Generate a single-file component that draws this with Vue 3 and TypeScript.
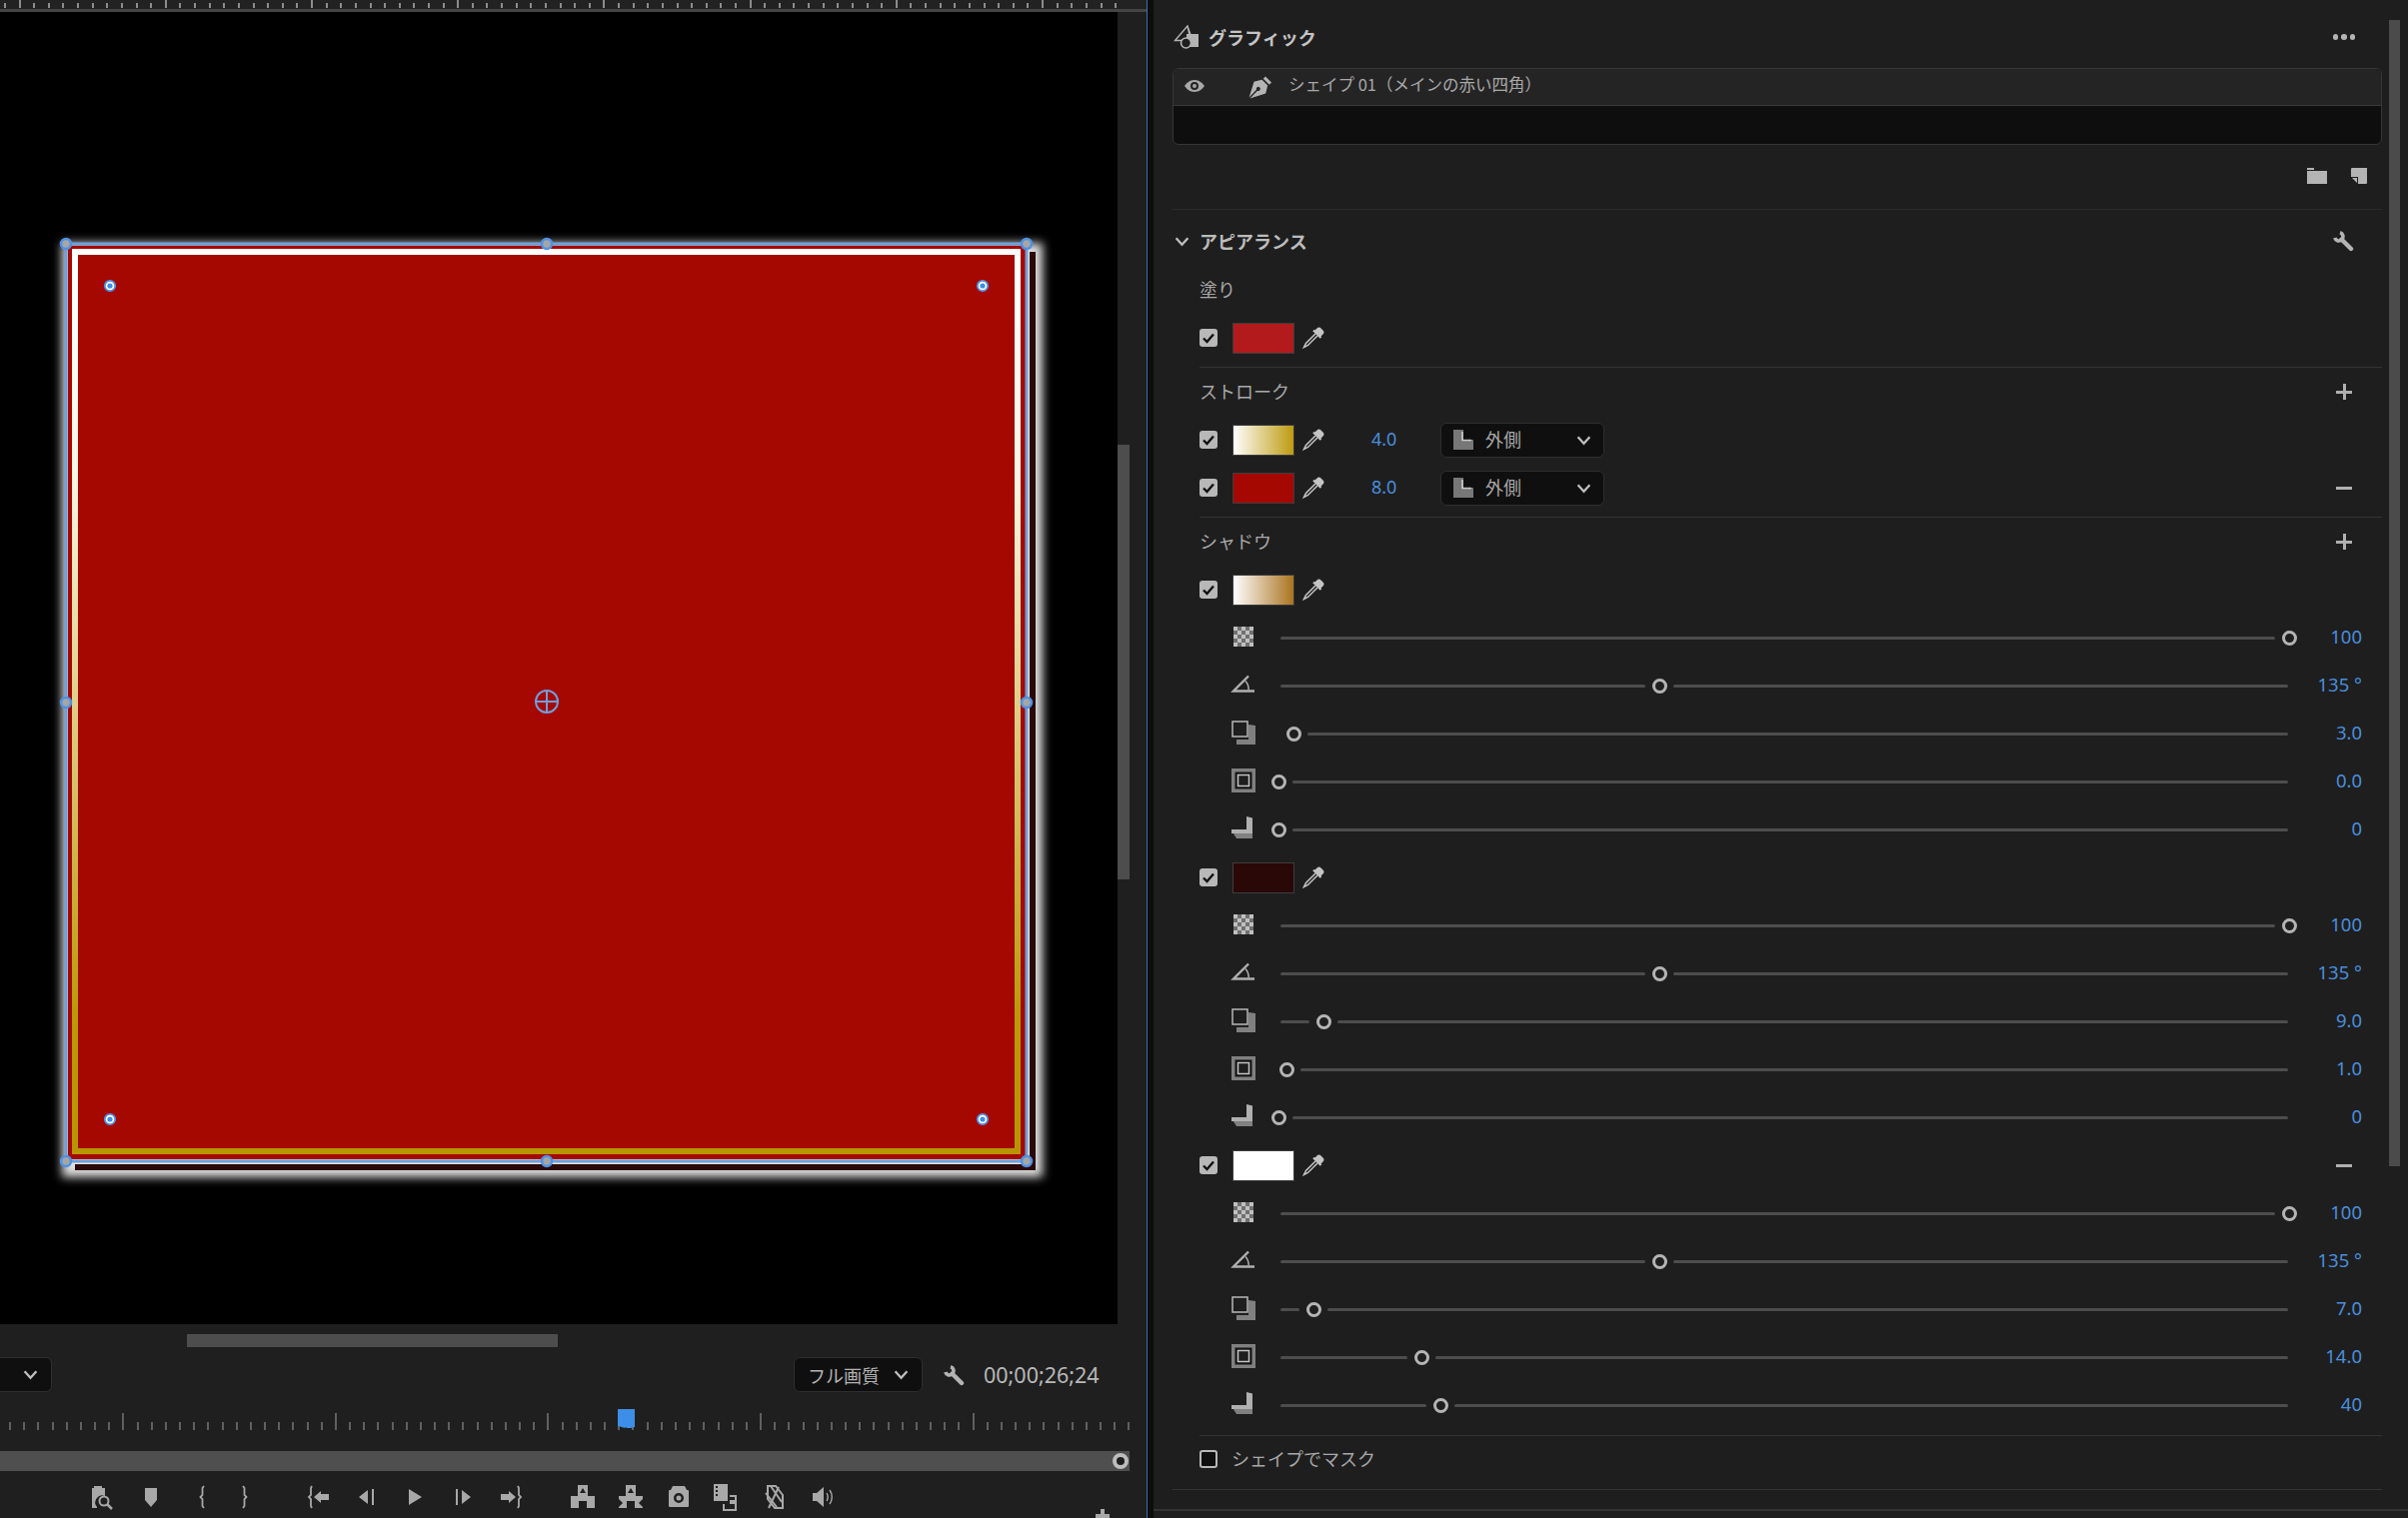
<template>
  <div class="app">
    <svg class="sprites" width="0" height="0">
      <symbol id="i-eye" viewBox="0 0 20 12"><path fill="#a8a8a8" fill-rule="evenodd" d="M10 0c4.5 0 8 3 10 6-2 3-5.500 6-10 6S2 9 0 6c2-3 5.500-6 10-6zm0 2a4 4 0 1 0 0 8 4 4 0 0 0 0-8zm0 2a2 2 0 1 1 0 4 2 2 0 0 1 0-4z"/></symbol>
      <symbol id="i-pen" viewBox="0 0 24 24"><path fill="#b4b4b4" d="M17 1.500l6 6-2.200 2.200-6-6zM13.500 4.800l5.700 5.700-2 8L1.500 23.500l7.500-7.800a2 2 0 1 0-1-1L.6 22.500 5.500 6.800z"/></symbol>
      <symbol id="i-graphic" viewBox="0 0 26 24"><path fill="none" stroke="#b4b4b4" stroke-width="1.400" d="M14 1 1.500 15.500H19zM14 1l2 9"/><path fill="#b4b4b4" d="M13 9h12v13H13z"/><circle cx="12.500" cy="18" r="5" fill="#1e1e1e" stroke="#b4b4b4" stroke-width="1.600"/></symbol>
      <symbol id="i-folder" viewBox="0 0 20 16"><path fill="#b4b4b4" d="M0 3h20v13H0zM0 0h7v2H0z"/></symbol>
      <symbol id="i-item" viewBox="0 0 16 16"><path fill="#b4b4b4" fill-rule="evenodd" d="M1 0h15v15a1 1 0 0 1-1 1H7v-7H0V1a1 1 0 0 1 1-1zM1 10h5v5z"/></symbol>
      <symbol id="i-wrench" viewBox="0 0 22 22"><path fill="none" stroke="#b4b4b4" stroke-width="3.600" d="M8 2.800A4.200 4.200 0 1 1 2.800 8"/><path stroke="#b4b4b4" stroke-width="4.400" stroke-linecap="round" d="M9.500 9.500 19 19"/></symbol>
      <symbol id="i-dropper" viewBox="0 0 22 22"><path fill="#c4c4c4" d="M14.500 1.500a2.800 2.800 0 0 1 4 0l2 2a2.800 2.800 0 0 1 0 4L18 10l-6-6z"/><path stroke="#c4c4c4" stroke-width="2.200" d="M11 3.500l7.500 7.500"/><path fill="none" stroke="#c4c4c4" stroke-width="1.500" d="M13 7 3.500 16.500 1.500 20.500l4-2L15 9"/></symbol>
      <symbol id="i-corner" viewBox="0 0 20 20"><path fill="#777" d="M0 0h10v10h10v10H0z"/><path fill="none" stroke="#ccc" stroke-width="1.600" d="M9 2v8.500h9"/></symbol>

      <symbol id="s-opacity" viewBox="0 0 26 26"><path fill="#707070" d="M3 3h20v20H3z"/><path fill="#c0c0c0" d="M3 3h4v4H3zM11 3h4v4h-4zM19 3h4v4h-4zM7 7h4v4H7zM15 7h4v4h-4zM3 11h4v4H3zM11 11h4v4h-4zM19 11h4v4h-4zM7 15h4v4H7zM15 15h4v4h-4zM3 19h4v4H3zM11 19h4v4h-4zM19 19h4v4h-4z"/></symbol>
      <symbol id="s-angle" viewBox="0 0 26 26"><path fill="none" stroke="#b0b0b0" stroke-width="2.400" d="M18 4.500 3 19.500h21"/><path fill="none" stroke="#b0b0b0" stroke-width="1.500" d="M15 9.500c2 2 3.200 5 3.200 9"/></symbol>
      <symbol id="s-offset" viewBox="0 0 26 26"><path fill="#808080" d="M18 5l7 1v19H6v-5h12z"/><rect x="2" y="2" width="15" height="15" fill="#1e1e1e" stroke="#b8b8b8" stroke-width="1.500"/></symbol>
      <symbol id="s-size" viewBox="0 0 26 26"><path fill="#808080" d="M1 1h24v24H1z"/><rect x="5" y="5" width="16" height="16" fill="#151515" stroke="#151515"/><rect x="7.500" y="7.500" width="11" height="11" fill="#1e1e1e" stroke="#c4c4c4" stroke-width="1.500"/></symbol>
      <symbol id="s-blur" viewBox="0 0 26 26"><path fill="#808080" d="M1 15h16l5-2v10H6z"/><path fill="#b0b0b0" d="M16 1l6 1.500V18H1v-4h15z"/></symbol>

      <symbol id="t-export" viewBox="0 0 28 28"><path fill="#a8a8a8" d="M5 5V3h8v2h3v8a7 7 0 0 0-8 11v1H3V5z"/><circle cx="15" cy="18" r="4.500" fill="none" stroke="#a8a8a8" stroke-width="2"/><path stroke="#a8a8a8" stroke-width="2.500" d="M18 21l5 5"/></symbol>
      <symbol id="t-marker" viewBox="0 0 28 28"><path fill="#a8a8a8" d="M8 5h12v12l-6 7-6-7z"/></symbol>
      <symbol id="t-in" viewBox="0 0 28 28"><path fill="none" stroke="#a8a8a8" stroke-width="1.800" d="M19 3l-1.500 2v7l-2 2 2 2v7l1.500 2"/></symbol>
      <symbol id="t-out" viewBox="0 0 28 28"><path fill="none" stroke="#a8a8a8" stroke-width="1.800" d="M10 3l1.500 2v7l2 2-2 2v7L10 25"/></symbol>
      <symbol id="t-goin" viewBox="0 0 28 28"><path fill="none" stroke="#a8a8a8" stroke-width="1.800" d="M7 3l-1 2v7l-2 2 2 2v7l1 2"/><path fill="#a8a8a8" d="M9 14l7-6v3h8v6h-8v3z"/></symbol>
      <symbol id="t-stepb" viewBox="0 0 28 28"><path fill="#a8a8a8" d="M15 7v14L6 14z"/><path stroke="#a8a8a8" stroke-width="2" d="M20 6v16"/></symbol>
      <symbol id="t-play" viewBox="0 0 28 28"><path fill="#a8a8a8" d="M8 6l13 8-13 8z"/></symbol>
      <symbol id="t-stepf" viewBox="0 0 28 28"><path fill="#a8a8a8" d="M13 7v14l9-7z"/><path stroke="#a8a8a8" stroke-width="2" d="M8 6v16"/></symbol>
      <symbol id="t-goout" viewBox="0 0 28 28"><path fill="none" stroke="#a8a8a8" stroke-width="1.800" d="M21 3l1 2v7l2 2-2 2v7l-1 2"/><path fill="#a8a8a8" d="M19 14l-7-6v3H4v6h8v3z"/></symbol>
      <symbol id="t-lift" viewBox="0 0 28 28"><path fill="#a8a8a8" fill-rule="evenodd" d="M9 2h10v11h7v12h-8v-7h-8v7H2V13h7zm5 3-3 5h6z"/></symbol>
      <symbol id="t-extract" viewBox="0 0 28 28"><path fill="#a8a8a8" fill-rule="evenodd" d="M9 2h10v11h7v3l-4 4 4 4v1h-8v-7h-8v7H2v-1l4-4-4-4v-3h7zm5 3-3 5h6z"/></symbol>
      <symbol id="t-camera" viewBox="0 0 28 28"><path fill="#a8a8a8" fill-rule="evenodd" d="M8 3h12l2 4h1a1 1 0 0 1 1 1v15a1 1 0 0 1-1 1H5a1 1 0 0 1-1-1V8a1 1 0 0 1 1-1h1zm6 7a5 5 0 1 0 0 10 5 5 0 0 0 0-10zm0 2.500a2.500 2.500 0 1 1 0 5 2.500 2.500 0 0 1 0-5z"/></symbol>
      <symbol id="t-compare" viewBox="0 0 28 28"><path fill="#a8a8a8" d="M1 1h14v17H1z"/><path fill="#1e1e1e" d="M3 3h2v2H3zM3 7h2v2H3zM3 11h2v2H3z"/><path fill="none" stroke="#a8a8a8" stroke-width="2" d="M17 13h6v14H11v-6"/><path fill="#a8a8a8" d="M17 17h6v4h-6z"/></symbol>
      <symbol id="t-hatch" viewBox="0 0 28 28"><path fill="none" stroke="#a8a8a8" stroke-width="2" d="M7 3h8l7 9v13h-8L7 16zM5 10l11 14M10 3l11 16M18 4 8 25"/></symbol>
      <symbol id="t-speaker" viewBox="0 0 28 28"><path fill="#a8a8a8" d="M4 10h4l7-6v20l-7-6H4z"/><path fill="none" stroke="#a8a8a8" stroke-width="1.400" d="M18 10c1.500 2.500 1.500 5.500 0 8M21 7c3 4 3 10 0 14"/></symbol>
    </svg>

    <main class="left">
      <div class="ruler">
        <svg width="1130" height="9">
          <line v-for="t in topTicks" :key="t.x" :x1="t.x" :x2="t.x" :y1="t.major ? 0 : 3" y2="8" stroke="#b0b0b0" stroke-width="1.500" />
        </svg>
      </div>
      <div class="monitor">
        <div class="stage">
          <svg class="art" width="1118" height="1313" viewBox="0 12 1118 1313">
            <defs>
              <filter id="glow" x="-5%" y="-5%" width="110%" height="110%"><feGaussianBlur stdDeviation="5" /></filter>
              <linearGradient id="strokeGrad" x1="0" y1="0" x2="0" y2="1">
                <stop offset="0" stop-color="#ffffff" />
                <stop offset="0.25" stop-color="#fbf6e4" />
                <stop offset="0.85" stop-color="#bb9908" />
                <stop offset="1" stop-color="#b89500" />
              </linearGradient>
            </defs>
            <rect x="62" y="243" width="981" height="935" fill="#e0e0e0" filter="url(#glow)" />
            <rect x="75" y="252" width="961" height="919" fill="#2a0708" />
            <rect x="71" y="247" width="959" height="918" fill="#e6e3de" />
            <rect x="68" y="246" width="959" height="914" fill="#a50800" />
            <rect x="75" y="252" width="943" height="900" fill="none" stroke="url(#strokeGrad)" stroke-width="6" />
            <rect x="66" y="244" width="961" height="918" fill="none" stroke="#6f9fdc" stroke-width="3" />
            <g v-for="h in edgeHandles" :key="h.x + '-' + h.y">
              <circle :cx="h.x" :cy="h.y" r="5" fill="#a6a6a6" stroke="#4f92e4" stroke-width="2.500" />
            </g>
            <g v-for="h in cornerPoints" :key="h.x + '-' + h.y">
              <circle :cx="h.x" :cy="h.y" r="5.200" fill="#ffffff" stroke="#4f92e4" stroke-width="1.800" />
              <circle :cx="h.x" :cy="h.y" r="2.600" fill="#3d8ee6" />
            </g>
            <circle cx="547" cy="702" r="11" fill="none" stroke="#6f9fdc" stroke-width="2" />
            <path d="M536 702h22M547 691v22" stroke="#6f9fdc" stroke-width="2" />
          </svg>
        </div>
        <div class="vscroll"><div class="vthumb"></div></div>
      </div>
      <div class="hscroll"></div>
      <div class="toolbar">
        <div class="select select-zoom"><svg class="chev" viewBox="0 0 14 10"><path d="M1.500 2 7 8l5.500-6" /></svg></div>
        <div class="select select-quality">
          <span>フル画質</span>
          <svg class="chev" viewBox="0 0 14 10"><path d="M1.500 2 7 8l5.500-6" /></svg>
        </div>
        <svg class="tool-wrench"><use href="#i-wrench" /></svg>
        <span class="timecode">00;00;26;24</span>
      </div>
      <div class="timeline">
        <svg width="1147" height="59">
          <line v-for="t in bottomTicks" :key="t.x" :x1="t.x" :x2="t.x" :y1="t.major ? 21 : 30" y2="38" stroke="#8c8c8c" stroke-width="1.200" />
          <path d="M618 17h17v18l-4 1-4 0-1 -1-1 1-3-1-4-1z" fill="#3d8ee6" />
        </svg>
      </div>
      <div class="scrub">
        <span class="scrub-thumb"></span>
      </div>
      <div class="transport">
        <div v-for="(group, i) in transportGroups" :key="i" class="transport-group">
          <svg v-for="id in group" :key="id" class="transport-btn"><use :href="'#t-' + id" /></svg>
        </div>
        <span class="add-btn"></span>
      </div>
    </main>

    <aside class="right">
      <div class="scroller">
        <div class="content">
          <header class="panel-head">
            <svg class="icon-graphic"><use href="#i-graphic" /></svg>
            <span class="panel-title">グラフィック</span>
            <span class="dots"><i></i><i></i><i></i></span>
          </header>

          <div class="layers">
            <div class="layer">
              <svg class="icon-eye"><use href="#i-eye" /></svg>
              <svg class="icon-pen"><use href="#i-pen" /></svg>
              <span>シェイプ 01（メインの赤い四角）</span>
            </div>
          </div>
          <div class="layer-tools">
            <svg class="icon-folder"><use href="#i-folder" /></svg>
            <svg class="icon-item"><use href="#i-item" /></svg>
          </div>

          <div class="section-head">
            <svg class="section-chev" viewBox="0 0 14 10"><path d="M1.500 2 7 8l5.500-6" /></svg>
            <span>アピアランス</span>
            <svg class="icon-wrench"><use href="#i-wrench" /></svg>
          </div>

          <div class="section">
            <div class="group-label">塗り</div>
            <div class="color-row">
              <span class="check"><svg viewBox="0 0 18 18"><path d="M4 9.500l3.500 3.500L14 5.500" /></svg></span>
              <span class="swatch" style="background: #b31a1c"></span>
              <svg class="icon-dropper"><use href="#i-dropper" /></svg>
            </div>
            <hr class="rule" />

            <div class="group-label">
              ストローク
              <span class="plus"></span>
            </div>
            <div v-for="s in strokes" :key="s.value" class="color-row">
              <span class="check"><svg viewBox="0 0 18 18"><path d="M4 9.500l3.500 3.500L14 5.500" /></svg></span>
              <span class="swatch" :style="{ background: s.fill }"></span>
              <svg class="icon-dropper"><use href="#i-dropper" /></svg>
              <span class="stroke-value">{{ s.value }}</span>
              <div class="select select-side">
                <svg class="icon-corner"><use href="#i-corner" /></svg>
                <span>外側</span>
                <svg class="chev" viewBox="0 0 14 10"><path d="M1.500 2 7 8l5.500-6" /></svg>
              </div>
              <span v-if="s.removable" class="minus"></span>
            </div>
            <hr class="rule" />

            <div class="group-label">
              シャドウ
              <span class="plus"></span>
            </div>
            <template v-for="(sh, i) in shadows" :key="i">
              <div class="color-row">
                <span class="check"><svg viewBox="0 0 18 18"><path d="M4 9.500l3.500 3.500L14 5.500" /></svg></span>
                <span class="swatch" :style="{ background: sh.fill }"></span>
                <svg class="icon-dropper"><use href="#i-dropper" /></svg>
                <span v-if="sh.removable" class="minus"></span>
              </div>
              <div v-for="(row, r) in sh.rows" :key="r" class="slider-row">
                <svg class="slider-icon"><use :href="'#s-' + sliderIcons[r]" /></svg>
                <div class="slider">
                  <i class="seg" :style="{ width: leftWidth(row.at) + 'px' }"></i>
                  <i class="seg seg-rest" :style="{ marginLeft: rightGap(row.at) + 'px' }"></i>
                  <span class="thumb" :style="{ left: row.at + 'px' }"></span>
                </div>
                <span class="slider-value">{{ row.value }}</span>
              </div>
            </template>
            <hr class="rule rule-last" />

            <div class="mask-row">
              <span class="check check-off"></span>
              <span class="mask-label">シェイプでマスク</span>
            </div>
          </div>
          <hr class="rule rule-end" />
        </div>
        <div class="panel-scroll"><div class="panel-thumb"></div></div>
      </div>
      <div class="panel-foot"></div>
    </aside>
  </div>
</template>

<script setup lang="ts">
interface Tick {
  x: number;
  major: boolean;
}

interface SliderRow {
  at: number;
  value: string;
}

const topTicks: Tick[] = Array.from({ length: 78 }, (_, i) => ({
  x: Math.round(5 + i * 14.62),
  major: i % 10 === 1,
}));

const bottomTicks: Tick[] = Array.from({ length: 80 }, (_, i) => ({
  x: Math.round(10 + i * 14.17),
  major: i % 15 === 8,
}));

const edgeHandles = [
  { x: 66, y: 244 },
  { x: 547, y: 244 },
  { x: 1027, y: 244 },
  { x: 66, y: 703 },
  { x: 1027, y: 703 },
  { x: 66, y: 1162 },
  { x: 547, y: 1162 },
  { x: 1027, y: 1162 },
];

const cornerPoints = [
  { x: 110, y: 286 },
  { x: 983, y: 286 },
  { x: 110, y: 1120 },
  { x: 983, y: 1120 },
];

const transportGroups = [
  ["export", "marker", "in", "out"],
  ["goin", "stepb", "play", "stepf", "goout"],
  ["lift", "extract", "camera", "compare", "hatch", "speaker"],
];

const strokes = [
  { value: "4.0", fill: "linear-gradient(90deg, #ffffff, #bd9b10)", removable: false },
  { value: "8.0", fill: "#a50800", removable: true },
];

const sliderIcons = ["opacity", "angle", "offset", "size", "blur"];

const shadowRows = (offset: [number, string], size: [number, string], blur: [number, string]): SliderRow[] => [
  { at: 1009, value: "100" },
  { at: 379, value: "135 °" },
  { at: offset[0], value: offset[1] },
  { at: size[0], value: size[1] },
  { at: blur[0], value: blur[1] },
];

const shadows = [
  {
    fill: "linear-gradient(90deg, #ffffff, #ab7420)",
    removable: false,
    rows: shadowRows([13, "3.0"], [-2, "0.0"], [-2, "0"]),
  },
  {
    fill: "#2a0808",
    removable: false,
    rows: shadowRows([43, "9.0"], [6, "1.0"], [-2, "0"]),
  },
  {
    fill: "#ffffff",
    removable: true,
    rows: shadowRows([33, "7.0"], [141, "14.0"], [160, "40"]),
  },
];

// track is cut 14px either side of the thumb
const leftWidth = (at: number) => Math.max(0, at - 14);
const rightGap = (at: number) => Math.max(0, at + 14 - leftWidth(at));
</script>

<style>
html,
body {
  margin: 0;
  background: #1e1e1e;
  overflow: hidden;
}
</style>

<style scoped>
.app {
  display: flex;
  width: 2409px;
  height: 1519px;
  overflow: hidden;
  background: #0d0d0d;
  color: #a8a8a8;
  font-family: "Noto Sans CJK JP", "Noto Sans", sans-serif;
  font-size: 18px;
}

.sprites {
  position: absolute;
}

/* program monitor */
.left {
  width: 1147px;
  flex: none;
  background: #1f1f1f;
  border-right: 1px solid #3c6ea8;
}

.ruler {
  height: 12px;
  box-sizing: border-box;
  background: #222222;
  border-bottom: 3px solid #444444;
  overflow: hidden;
}

.ruler svg {
  display: block;
}

.monitor {
  display: flex;
  height: 1313px;
}

.stage {
  position: relative;
  width: 1118px;
  background: #000000;
  overflow: hidden;
}

.art {
  display: block;
}

.vscroll {
  width: 12px;
  padding-top: 433px;
}

.vthumb {
  height: 435px;
  background: #4d4d4d;
}

.hscroll {
  width: 371px;
  height: 13px;
  margin: 10px 0 10px 187px;
  background: #4d4d4d;
}

.toolbar {
  display: flex;
  align-items: center;
  height: 35px;
  padding-right: 47px;
}

.select {
  display: flex;
  align-items: center;
  box-sizing: border-box;
  background: #0f0f0f;
  border: 1px solid #2e2e2e;
  border-radius: 6px;
}

.chev {
  width: 15px;
  height: 11px;
  flex: none;
}

.chev path,
.section-chev path {
  fill: none;
  stroke: #bdbdbd;
  stroke-width: 2.200;
}

.select-zoom {
  width: 52px;
  height: 35px;
  padding-left: 23px;
  border-left: none;
  border-radius: 0 6px 6px 0;
}

.select-quality {
  width: 129px;
  height: 35px;
  margin-left: 742px;
  padding-left: 13px;
  gap: 13px;
  color: #b4b4b4;
}

.select-quality span {
  width: 73px;
  flex: none;
  white-space: nowrap;
}

.tool-wrench {
  width: 22px;
  height: 22px;
  margin-left: 20px;
}

.timecode {
  margin-left: 19px;
  font-family: "Noto Sans", sans-serif;
  font-size: 21.500px;
  color: #b8b8b8;
  white-space: nowrap;
}

.timeline {
  height: 59px;
}

.timeline svg {
  display: block;
}

.scrub {
  position: relative;
  width: 1130px;
  height: 20px;
  background: #4f4f4f;
}

.scrub-thumb {
  position: absolute;
  right: 1px;
  top: 2px;
  box-sizing: border-box;
  width: 16px;
  height: 16px;
  border: 4px solid #bdbdbd;
  border-radius: 50%;
  background: #1e1e1e;
}

.transport {
  position: relative;
  display: flex;
  height: 47px;
  padding: 12px 0 0 79px;
  box-sizing: border-box;
  gap: 24px;
}

.transport-group {
  display: flex;
}

.transport-btn {
  width: 48px;
  height: 28px;
}

.add-btn {
  position: absolute;
  left: 1096px;
  top: 38px;
  width: 14px;
  height: 14px;
  background:
    linear-gradient(#a8a8a8, #a8a8a8) center / 4px 14px no-repeat,
    linear-gradient(#a8a8a8, #a8a8a8) center / 14px 4px no-repeat;
}

/* graphics panel */
.right {
  flex: 1;
  margin-left: 6px;
  display: flex;
  flex-direction: column;
  background: #1e1e1e;
}

.scroller {
  display: flex;
  height: 1510px;
}

.content {
  width: 1210px;
  margin-left: 19px;
  padding-top: 12px;
}

.panel-head {
  display: flex;
  align-items: center;
  height: 50px;
  margin-bottom: 6px;
  padding-right: 27px;
}

.icon-graphic {
  width: 26px;
  height: 24px;
  margin-left: 1px;
}

.panel-title {
  margin-left: 9px;
  font-weight: 700;
  color: #c4c4c4;
}

.dots {
  display: flex;
  gap: 3px;
  margin-left: auto;
}

.dots i {
  width: 5.500px;
  height: 5.500px;
  border-radius: 50%;
  background: #b4b4b4;
}

.layers {
  box-sizing: border-box;
  height: 77px;
  background: #0e0e0e;
  border: 1px solid #363636;
  border-radius: 6px;
  overflow: hidden;
}

.layer {
  display: flex;
  align-items: center;
  height: 36px;
  background: #242424;
  border-bottom: 1px solid #3a3a3a;
  font-size: 16.500px;
}

.icon-eye {
  width: 20px;
  height: 12px;
  margin: 0 0 3px 11px;
}

.icon-pen {
  width: 24px;
  height: 24px;
  margin-left: 44px;
}

.layer span {
  margin-left: 16px;
  padding-bottom: 6px;
  white-space: nowrap;
}

.layer-tools {
  display: flex;
  align-items: center;
  justify-content: flex-end;
  height: 64px;
  padding: 0 15px 3px 0;
  box-sizing: border-box;
  height: 65px;
  gap: 24px;
  border-bottom: 1px solid #2b2b2b;
}

.icon-folder {
  width: 20px;
  height: 16px;
}

.icon-item {
  width: 16px;
  height: 16px;
}

.section-head {
  display: flex;
  align-items: center;
  height: 62px;
  padding-right: 28px;
  font-weight: 700;
  color: #bcbcbc;
}

.section-chev {
  width: 15px;
  height: 11px;
  margin-left: 2px;
}

.section-head span {
  margin-left: 10px;
}

.icon-wrench {
  width: 22px;
  height: 22px;
  margin-left: auto;
}

.section {
  margin-left: 27px;
}

.group-label {
  position: relative;
  display: flex;
  align-items: center;
  box-sizing: border-box;
  height: 36px;
  padding-bottom: 2px;
  margin-bottom: 6px;
}

.rule {
  height: 1px;
  margin: 5px 0 6px;
  border: none;
  background: #333333;
}

.rule-last {
  margin: 6px 0 0;
}

.rule-end {
  margin: 7px 0 0;
}

.color-row {
  position: relative;
  display: flex;
  align-items: center;
  height: 48px;
}

.check {
  display: block;
  box-sizing: border-box;
  width: 18px;
  height: 18px;
  flex: none;
  background: #b8b8b8;
  border-radius: 3px;
}

.check svg {
  display: block;
  width: 18px;
  height: 18px;
}

.check path {
  fill: none;
  stroke: #111111;
  stroke-width: 2.400;
}

.check-off {
  background: #0f0f0f;
  border: 2.500px solid #b8b8b8;
}

.swatch {
  box-sizing: border-box;
  width: 62px;
  height: 31px;
  margin-left: 15px;
  flex: none;
  border: 1px solid #3c3c3c;
  background-clip: padding-box;
}

.icon-dropper {
  width: 22px;
  height: 22px;
  margin-left: 8px;
  flex: none;
}

.stroke-value {
  width: 26px;
  margin-left: 47px;
  padding-bottom: 2px;
  font-family: "Noto Sans", sans-serif;
  color: #4a8edc;
}

.select-side {
  width: 164px;
  height: 35px;
  margin-left: 43px;
  padding-left: 12px;
}

.select-side span {
  width: 91px;
  margin-left: 12px;
  padding-bottom: 2px;
  flex: none;
}

.icon-corner {
  width: 20px;
  height: 20px;
  flex: none;
}

.plus,
.minus {
  position: absolute;
  right: 30px;
  top: 50%;
  width: 16px;
  height: 3px;
  margin-top: -1.500px;
  background: #b0b0b0;
}

.plus::after {
  content: "";
  position: absolute;
  left: 6.500px;
  top: -6.500px;
  width: 3px;
  height: 16px;
  background: #b0b0b0;
}

.slider-row {
  display: flex;
  align-items: center;
  height: 48px;
}

.slider-icon {
  width: 26px;
  height: 26px;
  margin: 0 0 3px 31px;
  flex: none;
}

.slider {
  position: relative;
  display: flex;
  width: 1008px;
  height: 3px;
  margin-left: 24px;
  flex: none;
}

.seg {
  display: block;
  height: 3px;
  flex: none;
  background: #4d4d4d;
  border-radius: 2px;
}

.seg-rest {
  flex: 1;
  min-width: 0;
}

.thumb {
  position: absolute;
  top: 50%;
  box-sizing: border-box;
  width: 15px;
  height: 15px;
  margin: -7.500px 0 0 -7.500px;
  border: 3.500px solid #b4b4b4;
  border-radius: 50%;
}

.slider-value {
  width: 74px;
  padding-bottom: 3px;
  flex: none;
  text-align: right;
  font-family: "Noto Sans", sans-serif;
  font-size: 18.500px;
  color: #4a8edc;
  white-space: nowrap;
}

.mask-row {
  display: flex;
  align-items: center;
  gap: 14px;
  height: 46px;
}

.mask-label {
  padding-bottom: 3px;
}

.panel-scroll {
  width: 11px;
  margin-left: 7px;
  padding-top: 20px;
}

.panel-thumb {
  height: 1147px;
  background: #4b4b4b;
}

.panel-foot {
  flex: 1;
  border-top: 2px solid #333333;
}
</style>
